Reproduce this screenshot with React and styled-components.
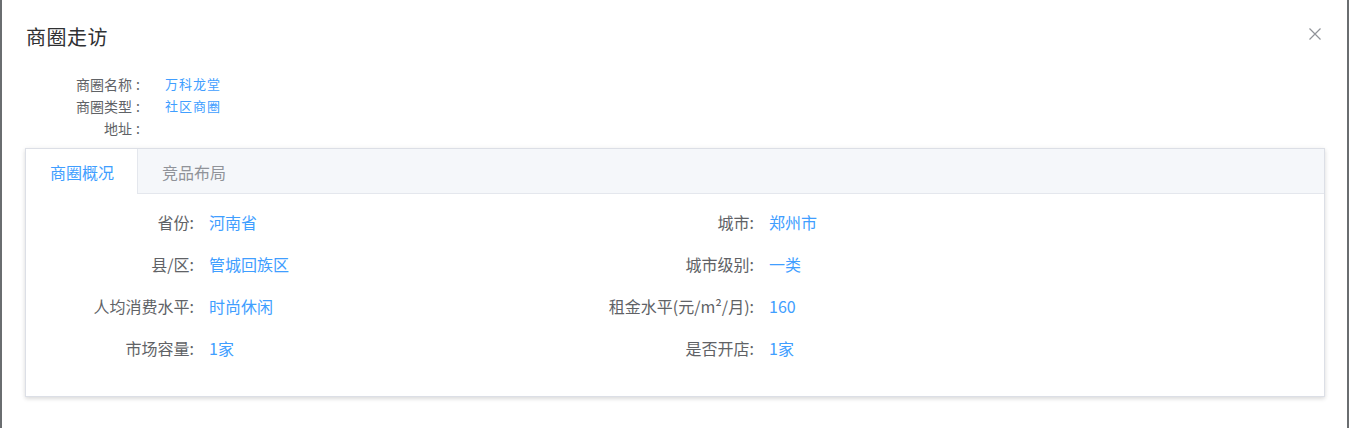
import React, { useState } from "react";
import styled, { createGlobalStyle } from "styled-components";

const GlobalStyle = createGlobalStyle`
  html, body {
    margin: 0;
    padding: 0;
    background: #6a6d70;
    font-family: "Noto Sans CJK SC", "Noto Sans", sans-serif;
    overflow: hidden;
  }
`;

const Overlay = styled.div`
  height: 428px;
  padding: 0 2px;
  box-sizing: border-box;
`;

const Dialog = styled.div`
  background: #fff;
  height: 100%;
  box-sizing: border-box;
  padding: 0 22px 0 23px;
`;

const Header = styled.div`
  display: flex;
  align-items: center;
  justify-content: space-between;
  height: 73px;
  padding: 0 0 0 1px;
`;

const Title = styled.h2`
  margin: 0;
  font-size: 20px;
  font-weight: 400;
  color: #303133;
  line-height: 24px;
  letter-spacing: 0.5px;
`;

const Close = styled.button`
  border: 0;
  background: none;
  padding: 0;
  margin-right: 3px;
  margin-top: -5px;
  width: 14px;
  height: 14px;
  display: flex;
  align-items: center;
  justify-content: center;
  cursor: pointer;
  svg {
    display: block;
  }
`;

const InfoList = styled.div`
  display: grid;
  grid-template-columns: 115px 1fr;
  column-gap: 25px;
  margin-bottom: 9px;
`;

const InfoLabel = styled.span`
  text-align: right;
  font-size: 14px;
  line-height: 22px;
  color: #606266;
`;

const Colon = styled.span`
  margin-left: 4px;
`;

const InfoValue = styled.span`
  font-size: 13px;
  line-height: 22px;
  color: #409eff;
  letter-spacing: 1px;
`;

const Card = styled.div`
  border: 1px solid #dcdfe6;
  background: #fff;
  box-shadow: 0 2px 4px 0 rgba(0, 0, 0, 0.12), 0 0 6px 0 rgba(0, 0, 0, 0.04);
`;

const TabBar = styled.div`
  display: flex;
  height: 44px;
  background: #f5f7fa;
  border-bottom: 1px solid #e4e7ed;
`;

const Tab = styled.div`
  display: flex;
  align-items: center;
  padding: 0 23px 0 24px;
  height: 45px;
  margin-bottom: -1px;
  box-sizing: border-box;
  font-size: 16px;
  cursor: pointer;
  color: ${(p) => (p.$active ? "#409eff" : "#909399")};
  background: ${(p) => (p.$active ? "#fff" : "transparent")};
  border-right: 1px solid ${(p) => (p.$active ? "#e4e7ed" : "transparent")};
`;

const Body = styled.div`
  display: grid;
  grid-template-columns: 560px 1fr;
  padding: 7px 0 27px 8px;
`;

const Field = styled.div`
  display: flex;
  align-items: center;
  height: 42px;
`;

const FieldLabel = styled.span`
  width: 175px;
  text-align: right;
  font-size: 16px;
  color: #606266;
  padding-right: 15px;
  box-sizing: border-box;
`;

const FieldValue = styled.span`
  font-size: 16px;
  color: #409eff;
`;

const info = [
  ["商圈名称", "万科龙堂"],
  ["商圈类型", "社区商圈"],
  ["地址", ""],
];

const fields = [
  ["省份:", "河南省"],
  ["城市:", "郑州市"],
  ["县/区:", "管城回族区"],
  ["城市级别:", "一类"],
  ["人均消费水平:", "时尚休闲"],
  ["租金水平(元/m²/月):", "160"],
  ["市场容量:", "1家"],
  ["是否开店:", "1家"],
];

export default function App() {
  const [tab, setTab] = useState(0);
  return (
    <>
      <GlobalStyle />
      <Overlay>
        <Dialog>
          <Header>
            <Title>商圈走访</Title>
            <Close aria-label="关闭">
              <svg width="12" height="12" viewBox="0 0 12 12">
                <path d="M0.5 0.5L11.5 11.5M11.5 0.5L0.5 11.5" stroke="#909399" strokeWidth="1.2" />
              </svg>
            </Close>
          </Header>
          <InfoList>
            {info.map(([l, v]) => (
              <React.Fragment key={l}>
                <InfoLabel>
                  {l}
                  <Colon>:</Colon>
                </InfoLabel>
                <InfoValue>{v}</InfoValue>
              </React.Fragment>
            ))}
          </InfoList>
          <Card>
            <TabBar>
              {["商圈概况", "竞品布局"].map((t, i) => (
                <Tab key={t} $active={tab === i} onClick={() => setTab(i)}>
                  {t}
                </Tab>
              ))}
            </TabBar>
            <Body>
              {fields.map(([l, v]) => (
                <Field key={l}>
                  <FieldLabel>{l}</FieldLabel>
                  <FieldValue>{v}</FieldValue>
                </Field>
              ))}
            </Body>
          </Card>
        </Dialog>
      </Overlay>
    </>
  );
}
